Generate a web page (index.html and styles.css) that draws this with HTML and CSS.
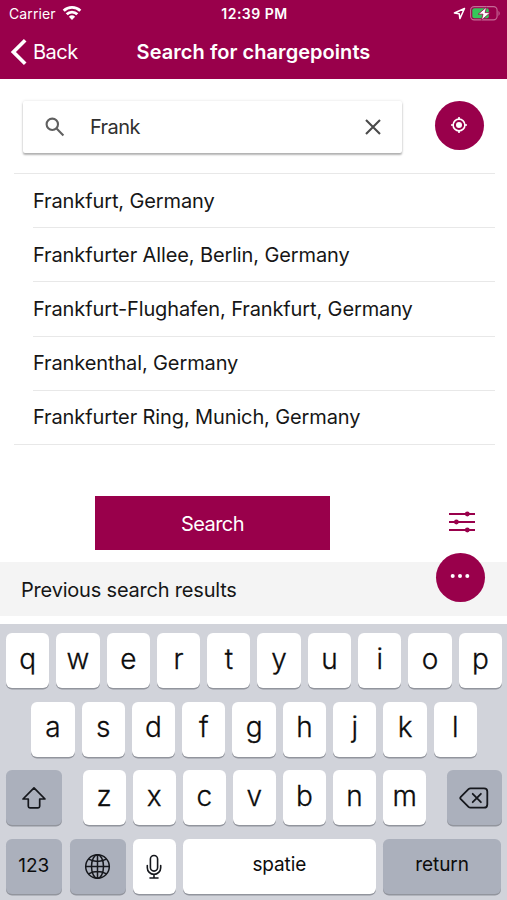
FILE: index.html
```html
<!DOCTYPE html>
<html lang="en">
<head>
<meta charset="utf-8">
<title>Search for chargepoints</title>
<link rel="stylesheet" href="styles.css">
</head>
<body>
<header class="top">
  <div class="status">
    <div class="status-left"><span class="carrier">Carrier</span>
      <svg class="wifi" width="20" height="16" viewBox="0 0 20 16" fill="none" stroke="#fff" stroke-width="2.9"><path d="M1.7 5.7a12 12 0 0 1 16.6 0"/><path d="M4.7 9.3a7.6 7.6 0 0 1 10.6 0"/><path d="M10 15l-3.1-3.2a4.5 4.5 0 0 1 6.2 0z" fill="#fff" stroke="none"/></svg>
    </div>
    <span class="time">12:39 PM</span>
    <div class="status-right">
      <svg width="13" height="13" viewBox="0 0 13 13" fill="none" stroke="#fff" stroke-width="1.5" stroke-linejoin="round"><path d="M11.5 1.5L1.4 6l4.8.7.7 4.9z"/></svg>
      <svg width="31" height="15" viewBox="0 0 31 15"><rect x=".6" y=".6" width="26.5" height="13.3" rx="3.6" fill="none" stroke="#c66b98" stroke-width="1.1"/><path d="M28.5 4.8q2.4 2.6 0 5.2z" fill="#c66b98"/><rect x="2.3" y="2.3" width="16.5" height="10" rx="2" fill="#35c759"/><path d="M16.6 1L8.2 8.2h4.8L11.4 14.2l8.9-7.6h-5.2z" fill="#fff" stroke="#99004b" stroke-width=".8"/></svg>
    </div>
  </div>
  <div class="nav">
    <a class="back"><svg width="18" height="28" viewBox="0 0 18 28" fill="none" stroke="#fff" stroke-width="3.7"><path d="M15.2 2.3L3.4 14l11.8 11.7"/></svg><span class="back-text">Back</span></a>
    <h1 class="title">Search for chargepoints</h1>
  </div>
</header>
<main>
  <section class="search-row">
    <div class="search-box">
      <svg width="20" height="20" viewBox="0 0 20 20" fill="none" stroke="#606060" stroke-width="2.1"><circle cx="7.3" cy="7.3" r="5.7"/><path d="M11.6 11.6l6.8 6.8"/></svg>
      <span class="query">Frank</span>
      <svg width="18" height="18" viewBox="0 0 18 18" fill="none" stroke="#4b4b4b" stroke-width="2.1"><path d="M2 2l14 14M16 2L2 16"/></svg>
    </div>
    <button class="round locate"><svg width="18" height="18" viewBox="0 0 18 18" fill="none" stroke="#fff" stroke-width="1.6"><circle cx="9" cy="9" r="5.9"/><circle cx="9" cy="9" r="3" fill="#fff" stroke="none"/><path d="M9 1v3M9 14v3M1 9h3M14 9h3"/></svg></button>
  </section>
  <ul class="results">
    <li class="result">Frankfurt, Germany</li>
    <li class="result">Frankfurter Allee, Berlin, Germany</li>
    <li class="result">Frankfurt-Flughafen, Frankfurt, Germany</li>
    <li class="result">Frankenthal, Germany</li>
    <li class="result">Frankfurter Ring, Munich, Germany</li>
  </ul>
  <section class="actions">
    <button class="search-button">Search</button>
    <svg class="filters" width="28" height="22" viewBox="0 0 28 22" stroke="#99004b" stroke-width="1.8" fill="#99004b"><path d="M1 3h26M1 11h26M1 19h26"/><g stroke="none"><circle cx="19.3" cy="3" r="2.4"/><circle cx="8.4" cy="11" r="2.4"/><circle cx="19.3" cy="19" r="2.4"/></g></svg>
  </section>
  <section class="previous"><h2 class="previous-title">Previous search results</h2>
    <button class="round more"><svg width="20" height="6" viewBox="0 0 20 6" fill="#fff"><circle cx="2.7" cy="3" r="2"/><circle cx="10" cy="3" r="2"/><circle cx="17.3" cy="3" r="2"/></svg></button>
  </section>
</main>
<div class="keyboard">
  <div class="keys"><span class="key">q</span><span class="key">w</span><span class="key">e</span><span class="key">r</span><span class="key">t</span><span class="key">y</span><span class="key">u</span><span class="key">i</span><span class="key">o</span><span class="key">p</span></div>
  <div class="keys keys-home"><span class="key">a</span><span class="key">s</span><span class="key">d</span><span class="key">f</span><span class="key">g</span><span class="key">h</span><span class="key">j</span><span class="key">k</span><span class="key">l</span></div>
  <div class="keys keys-lower">
    <span class="key dark shift"><svg width="26" height="24" viewBox="0 0 26 24" fill="none" stroke="#15171c" stroke-width="1.7" stroke-linejoin="round"><path d="M13 1.8L24 13h-5.3v7.2q0 1.6-1.6 1.6H8.9q-1.6 0-1.6-1.6V13H2z"/></svg></span>
    <span class="key">z</span><span class="key">x</span><span class="key">c</span><span class="key">v</span><span class="key">b</span><span class="key">n</span><span class="key">m</span>
    <span class="key dark delete"><svg width="30" height="22" viewBox="0 0 30 22" fill="none" stroke="#15171c" stroke-width="1.8" stroke-linejoin="round" stroke-linecap="round"><path d="M11.5 1.3H25q3.3 0 3.3 3.3v12.8q0 3.3-3.3 3.3H11.5q-1.1 0-2-.9L1.8 12.2q-1.1-1.2 0-2.4l7.7-7.6q.9-.9 2-.9z"/><path d="M13.7 6.8l8.2 8.4M21.9 6.8l-8.2 8.4"/></svg></span>
  </div>
  <div class="keys keys-bottom">
    <span class="key dark small">123</span>
    <span class="key dark"><svg width="27" height="27" viewBox="0 0 27 27" fill="none" stroke="#15171c" stroke-width="1.5"><circle cx="13.5" cy="13.5" r="11.8"/><ellipse cx="13.5" cy="13.5" rx="6" ry="11.8"/><path d="M13.5 1.7v23.6M1.7 13.5h23.6M4.5 6.2q9 4.4 18 0M4.5 20.8q9-4.4 18 0"/></svg></span>
    <span class="key"><svg width="16" height="26" viewBox="0 0 16 26" fill="none" stroke="#15171c" stroke-width="1.6" stroke-linecap="round"><rect x="4.4" y="1.5" width="7.2" height="15.6" rx="3.6"/><path d="M1.3 11.5v2.2a6.7 6.7 0 0 0 13.4 0v-2.2M8 20.6V24M4 24h8"/></svg></span>
    <span class="key small space">spatie</span>
    <span class="key dark small return">return</span>
  </div>
</div>
</body>
</html>
```
FILE: styles.css
```css
* { box-sizing: border-box; }
body {
  margin: 0;
  width: 507px;
  height: 900px;
  overflow: hidden;
  background: #fff;
  color: #161616;
  font: 20px/1.2 Inter, "Liberation Sans", sans-serif;
}
svg { display: block; flex: none; }
h1, h2, ul { margin: 0; padding: 0; list-style: none; }
button { border: 0; padding: 0; font: inherit; color: #fff; background: #99004b; }

.top { height: 79px; background: #99004b; color: #fff; }
.status, .nav { display: grid; grid-template-columns: 1fr auto 1fr; align-items: center; }
.status { height: 28px; padding: 0 7px 0 9px; font-size: 14px; }
.status-left, .status-right { display: flex; align-items: center; }
.status-left { gap: 6px; }
.carrier { letter-spacing: .1px; }
.wifi { margin-top: -1px; }
.time { font-weight: 600; letter-spacing: .5px; }
.status-right { justify-content: flex-end; gap: 4px; margin-right: -1px; padding-bottom: 1px; }
.nav { height: 47px; padding: 0 10px; }
.back { display: flex; align-items: center; gap: 5px; }
.back-text { letter-spacing: -.5px; }
.title { font-size: 20px; font-weight: 600; letter-spacing: .05px; }

.search-row { display: flex; align-items: flex-start; justify-content: space-between; height: 94px; padding: 22px 23px 0; }
.search-box {
  display: flex;
  align-items: center;
  width: 379px;
  height: 52px;
  padding: 0 20px 0 22px;
  border-radius: 2px;
  box-shadow: 0 2px 2px rgba(0, 0, 0, .28), 0 0 3px rgba(0, 0, 0, .13);
}
.query { flex: 1; margin-left: 25px; color: #303030; letter-spacing: -.6px; }
.round { display: grid; place-items: center; width: 49px; height: 49px; border-radius: 50%; }
.locate { padding: 0 1px 1px 0; }

.results { margin: 0 12px 0 14px; border-top: 1px solid #e8e8e8; border-bottom: 1px solid #e8e8e8; }
.result { display: flex; align-items: center; height: 54.2px; margin-left: 19px; letter-spacing: -.12px; }
.result:first-child { height: 53.3px; }
.result + .result { border-top: 1px solid #e8e8e8; }

.actions { display: flex; align-items: center; justify-content: space-between; height: 54px; margin: 51px 31px 0 95px; }
.search-button { width: 235px; height: 54px; padding-top: 1px; letter-spacing: -.6px; }
.filters { margin-bottom: 2px; }
.previous { position: relative; display: flex; align-items: center; height: 54px; margin-top: 12px; padding: 1px 0 0 21px; background: #f4f4f4; }
.previous-title { font-size: 20px; font-weight: 400; letter-spacing: -.2px; }
.more { position: absolute; right: 22px; top: -9px; padding: 0 1px 3px 0; }

.keyboard {
  display: grid;
  grid-template-rows: repeat(4, 55px);
  gap: 13.5px;
  height: 276px;
  margin-top: 8px;
  padding: 9.2px 5px 0 6px;
  background: #d1d3da;
}
.keys { display: flex; gap: 7px; }
.key {
  display: flex;
  align-items: center;
  justify-content: center;
  width: 43.3px;
  flex: none;
  padding-bottom: 2px;
  border-radius: 6px;
  background: #fff;
  box-shadow: 0 1.5px 0 #92959d;
  color: #0c0c0c;
  font-size: 28px;
  font-weight: 300;
  -webkit-text-stroke: .3px #0c0c0c;
}
.key svg { margin-top: 3px; }
.keys-home { padding-left: 25.3px; }
.keys-lower .key:not(.dark) { width: 43.1px; }
.dark { width: 55.5px; background: #abb0bc; }
.shift { margin-right: 14px; }
.delete { margin-left: 13.5px; }
.small { font-size: 19px; font-weight: 400; letter-spacing: -.1px; -webkit-text-stroke: 0; }
.keys-bottom .small { padding-bottom: 1px; }
.keys-bottom .dark:first-child { margin-right: 1.5px; padding-bottom: 0; }
.keys-bottom .space { width: 193px; }
.keys-bottom .return { width: 118.5px; }
```
